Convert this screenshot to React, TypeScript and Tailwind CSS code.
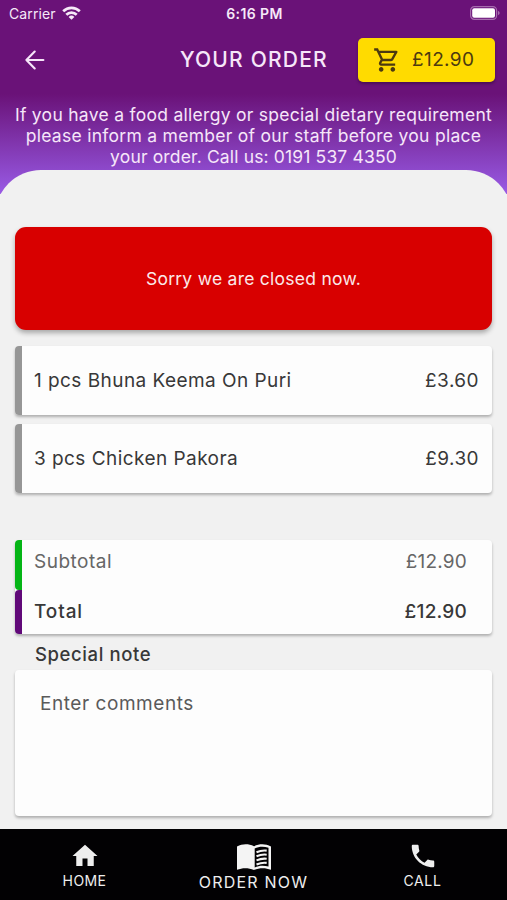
import React from "react";
import { MdHome, MdOutlineShoppingCart, MdPhone } from "react-icons/md";

interface OrderItem {
  name: string;
  price: string;
}

const items: OrderItem[] = [
  { name: "1 pcs Bhuna Keema On Puri", price: "£3.60" },
  { name: "3 pcs Chicken Pakora", price: "£9.30" },
];

function StatusBar() {
  return (
    <div className="grid h-7 grid-cols-3 items-center pl-[9px] pr-[7px] font-['Inter',sans-serif] text-sm text-[#f6e9f8]">
      <div className="flex items-center gap-[6px]">
        <span className="tracking-[0.1px]">Carrier</span>
        <svg className="-mt-[3px]" width="19" height="14" viewBox="0 0 19 14" fill="none" stroke="currentColor" strokeWidth="2.7" aria-hidden="true">
          <path d="M1.200 5.200a11.800 11.800 0 0 1 16.600 0" />
          <path d="M4.300 8.700a7.400 7.400 0 0 1 10.400 0" />
          <path d="M9.500 13.800 6.600 11a4.200 4.200 0 0 1 5.800 0z" fill="currentColor" stroke="none" />
        </svg>
      </div>
      <span className="text-center text-[14px] font-semibold tracking-[0.4px]">6:16 PM</span>
      <svg className="-mt-[2px] justify-self-end" width="30" height="14" viewBox="0 0 30 14" aria-hidden="true">
        <rect x="0.6" y="0.6" width="26" height="12.8" rx="3.8" fill="none" stroke="#a66cae" strokeWidth="1.2" />
        <rect x="2.2" y="2.2" width="22.8" height="9.6" rx="2" fill="#fff" />
        <path d="M28 5v4c1-.3 1.600-1.100 1.600-2S29 5.300 28 5z" fill="#a66cae" />
      </svg>
    </div>
  );
}

function BackIcon() {
  return (
    <svg width="20" height="20" viewBox="0 0 20 20" fill="none" stroke="currentColor" strokeWidth="2.100" strokeLinecap="round" strokeLinejoin="round" aria-hidden="true">
      <path d="M18.400 10H1.400M9.700 1.500 1.400 10l8.300 8.500" />
    </svg>
  );
}

function BookIcon() {
  return (
    <svg width="36" height="28" viewBox="0 0 36 28" fill="none" aria-hidden="true">
      <path d="M1 3.400C6.500 .6 12.500.6 18 3.200 23.500.6 29.500.6 35 3.400v23.400C29.500 24.600 23.500 24.700 18 27 12.500 24.700 6.500 24.600 1 26.800z" fill="#f4f4f4" />
      <path d="M18.700 5.400c4.300-2.100 9.200-2.200 13.800-.6v18.800c-4.600-1.200-9.500-1.100-13.800.8z" fill="#020103" />
      <path d="M20.500 9.200q5-2.200 10.200-1.600M20.500 13.300q5-2.200 10.200-1.600M20.500 17.400q5-2.200 10.200-1.600M20.500 21.500q5-2.200 10.200-1.600" stroke="#f4f4f4" strokeWidth="2.100" />
    </svg>
  );
}

export default function App() {
  return (
    <div className="flex h-[900px] w-[507px] flex-col overflow-hidden bg-[#f1f1f1] font-['Inter',sans-serif] text-[#383838]">
      <div className="h-[170px] shrink-0 bg-[linear-gradient(to_bottom,#6a1278_0,#6a1278_94px,#8d49cb_170px)] text-[#f6e6f9]">
        <StatusBar />
        <header className="flex h-[63px] items-center pl-[25px] pr-3">
          <BackIcon />
          <h1 className="ml-[135px] w-[150px] whitespace-nowrap text-[21px] font-medium tracking-[1.2px]">YOUR ORDER</h1>
          <button className="ml-auto flex h-11 w-[137px] items-center rounded-[5px] bg-[#ffdb00] pl-[15px] text-[#4c3a10] shadow-[0_2px_3px_rgba(0,0,0,0.3)]">
            <MdOutlineShoppingCart className="mt-px size-[28px]" />
            <span className="ml-[11px] pt-px text-[19px] tracking-[0.4px]">£12.90</span>
          </button>
        </header>
        <p className="mt-[14px] flex flex-col items-center whitespace-nowrap text-[17.500px] leading-[20.800px] tracking-[0.280px]">
          <span>If you have a food allergy or special dietary requirement</span>
          <span>please inform a member of our staff before you place</span>
          <span className="tracking-[0.150px]">your order. Call us: 0191 537 4350</span>
        </p>
      </div>

      {/* Rounded sheet over the end of the header gradient */}
      <div className="h-[24px] shrink-0 overflow-hidden bg-[linear-gradient(to_bottom,#8d49cb,#995be5)]">
        <div className="-mx-[5px] h-[100px] rounded-t-[46px] bg-[#f1f1f1]" />
      </div>

      <main className="flex grow flex-col px-[15px] pt-[33px]">
        <div className="flex h-[103px] items-center justify-center rounded-[11px] bg-[#d80000] text-[17.500px] text-[#fbe9e9] shadow-[0_3px_5px_rgba(0,0,0,0.3)]">
          <span className="pt-px tracking-[0.260px]">Sorry we are closed now.</span>
        </div>

        <div className="mt-4 flex flex-col gap-[9px]">
          {items.map((item) => (
            <div
              key={item.name}
              className="flex h-[69px] items-center justify-between rounded-[4px] bg-[#fdfdfd] pr-[13px] text-[19px] tracking-[0.450px] shadow-[0_2px_3px_rgba(0,0,0,0.28)]"
            >
              <div className="flex h-full items-center gap-3">
                <span className="h-full w-[7px] rounded-l-[4px] bg-[#969696]" />
                <span className="pt-[2px]">{item.name}</span>
              </div>
              <span className="pt-[2px]">{item.price}</span>
            </div>
          ))}
        </div>

        {/* Totals */}
        <div className="mt-[47px] flex h-[94px] shrink-0 flex-col rounded-[4px] bg-[#fdfdfd] text-[19px] tracking-[0.500px] shadow-[0_2px_3px_rgba(0,0,0,0.28)]">
          <div className="flex h-[50px] text-[#666]">
            <span className="w-[7px] rounded-l-[4px] bg-[#05b516]" />
            <span className="ml-3 mt-2">Subtotal</span>
            <span className="ml-auto mr-[25px] mt-2 tracking-[0.200px]">£12.90</span>
          </div>
          <div className="flex h-11 font-medium">
            <span className="w-[7px] rounded-l-[4px] bg-[#610979]" />
            <span className="ml-3 mt-2 tracking-[0.900px]">Total</span>
            <span className="ml-auto mr-[25px] mt-2 tracking-[0.200px]">£12.90</span>
          </div>
        </div>

        <label htmlFor="note" className="ml-5 mt-[7px] h-[29px] text-[18.500px] font-medium tracking-[0.600px]">
          Special note
        </label>
        <textarea
          id="note"
          className="block h-[146px] resize-none rounded-[4px] bg-[#fdfdfd] px-[25px] pt-5 text-[19px] tracking-[0.550px] shadow-[0_2px_3px_rgba(0,0,0,0.28)] placeholder:text-[#5a5a5a]"
          placeholder="Enter comments"
        />
      </main>

      <nav className="grid h-[71px] shrink-0 grid-cols-3 bg-[#020103] text-[#eee]">
        <a className="flex flex-col items-center pt-3">
          <MdHome className="size-[30px]" />
          <span className="text-sm leading-[19px] tracking-[0.400px]">HOME</span>
        </a>
        <a className="flex flex-col items-center pt-[14px]">
          <BookIcon />
          <span className="text-base leading-[22px] tracking-[1.200px]">ORDER NOW</span>
        </a>
        <a className="flex flex-col items-center pt-3">
          <MdPhone className="size-[30px]" />
          <span className="text-sm leading-[19px] tracking-[0.600px]">CALL</span>
        </a>
      </nav>
    </div>
  );
}
